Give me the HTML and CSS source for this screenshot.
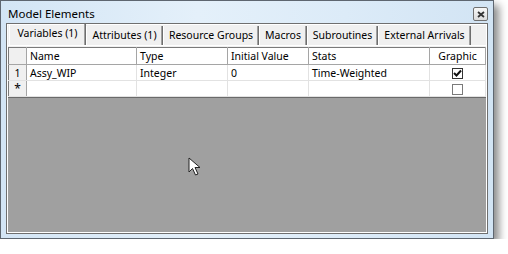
FILE: index.html
```html
<!DOCTYPE html>
<html>
<head>
    <meta charset="UTF-8">
    <title>Model Elements</title>
    <link rel="stylesheet" href="styles.css">
</head>
<body>
    <div class="window">
        <!-- Title bar -->
        <div class="titlebar">
            <span class="title">Model Elements</span>
            <span class="close">
                <svg width="8" height="7" viewBox="0 0 8 7">
                    <path d="M1 1 L7 6 M7 1 L1 6" stroke="#333" stroke-width="1.8"/>
                </svg>
            </span>
        </div>

        <!-- Client area -->
        <div class="panel">
            <div class="tabs">
                <div class="tab active t-vars">Variables (1)</div>
                <div class="tab t-attr">Attributes (1)</div>
                <div class="tab t-res">Resource Groups</div>
                <div class="tab t-mac">Macros</div>
                <div class="tab t-sub">Subroutines</div>
                <div class="tab t-ext">External Arrivals</div>
            </div>
            <div class="page">
                <table class="grid">
                    <tr class="head">
                        <th class="rowhead"></th>
                        <th class="c-name">Name</th>
                        <th class="c-type">Type</th>
                        <th class="c-init">Initial Value</th>
                        <th class="c-stats">Stats</th>
                        <th class="c-graphic">Graphic</th>
                    </tr>
                    <tr>
                        <td class="rowhead">1</td>
                        <td>Assy_WIP</td>
                        <td>Integer</td>
                        <td>0</td>
                        <td>Time-Weighted</td>
                        <td class="center"><span class="check on">
                            <svg width="9" height="9" viewBox="0 0 9 9">
                                <path d="M1 4 L3.5 6.5 L8 1.5" stroke="#111" stroke-width="2" fill="none"/>
                            </svg>
                        </span></td>
                    </tr>
                    <tr>
                        <td class="rowhead star">*</td>
                        <td></td>
                        <td></td>
                        <td></td>
                        <td></td>
                        <td class="center"><span class="check"></span></td>
                    </tr>
                </table>
                <div class="empty"></div>
            </div>
        </div>

        <!-- Mouse pointer -->
        <svg class="cursor" width="14" height="20" viewBox="0 0 14 20">
            <path d="M1 1 L1 15 L4.5 11.5 L7.5 18 L10 17 L7 10.5 L12 10.5 Z" fill="#fff" stroke="#222" stroke-width="1" stroke-linejoin="round"/>
        </svg>
    </div>
</body>
</html>
```

FILE: styles.css
```css
body {
    margin: 0;
    background-color: #fff;
    font-family: "Noto Sans", "Liberation Sans", sans-serif;
    font-size: 10.5px;
    color: #000;
}
.window {
    position: relative;
    width: 482px;
    height: 233px;
    border: 1px solid #5e6670;
    background: linear-gradient(90deg, #d3e5f5 0%, #e4f0fa 40%, #dcebf8 70%, #d2e4f4 100%);
    box-shadow: 5px 5px 8px rgba(0,0,0,0.45);
    padding: 0 5px 4px 5px;
}
.titlebar {
    height: 22px;
    display: flex;
    align-items: center;
    justify-content: space-between;
}
.title {
    font-size: 11.5px;
    padding-left: 2px;
    padding-top: 2px;
}
.close {
    width: 13px;
    height: 12px;
    margin-top: 4px;
    border: 1px solid #707070;
    border-radius: 2px;
    background: linear-gradient(#f8f8f8, #dcdcdc);
    display: flex;
    align-items: center;
    justify-content: center;
}
.panel {
    box-sizing: border-box;
    height: 211px;
    border: 1px solid #6f6f6f;
    box-shadow: inset 0 0 0 1px #fff;
    background-color: #f0f0f0;
    padding: 0 0 1px 1px;
    display: flex;
    flex-direction: column;
}
.tabs {
    display: flex;
    height: 21px;
    align-items: flex-end;
    padding-left: 1px;
}
.tab {
    box-sizing: border-box;
    height: 19px;
    line-height: 19px;
    text-align: center;
    border-left: 1px solid #fff;
    border-right: 1px solid #6e6e6e;
    box-shadow: inset -1px 0 0 #a0a0a0;
    white-space: nowrap;
}
.tab.active {
    height: 21px;
    line-height: 18px;
}
.t-vars { width: 77px; }
.t-attr { width: 77px; }
.t-res { width: 96px; }
.t-mac { width: 48px; }
.t-sub { width: 71px; }
.t-ext { width: 93px; }
.page {
    flex: 1;
    border-top: 1px solid #fff;
    padding: 1px 1px 0 0;
    display: flex;
    flex-direction: column;
}
.grid {
    border-collapse: collapse;
    table-layout: fixed;
    width: 478px;
    background-color: #fff;
    border-top: 1px solid #7a7a7a;
    border-left: 1px solid #7a7a7a;
}
.grid th {
    font-weight: normal;
    text-align: left;
    height: 16px;
    padding: 0 3px;
    background-color: #fff;
    border-right: 1px solid #a5a5a5;
    border-bottom: 1px solid #a5a5a5;
}
.grid td {
    height: 15px;
    padding: 0 3px;
    border-right: 1px solid #e2e2e2;
    border-bottom: 1px solid #e2e2e2;
    white-space: nowrap;
}
.grid .rowhead {
    width: 11px;
    background-color: #f0f0f0;
    border-right: 1px solid #a5a5a5;
    text-align: center;
}
.grid th.rowhead {
    background-color: #f0f0f0;
}
.grid .star {
    font-size: 12px;
    line-height: 10px;
}
.c-name { width: 103px; }
.c-type { width: 84px; }
.c-init { width: 74px; }
.c-stats { width: 114px; }
.grid th.c-graphic { text-align: center; }
.center { text-align: center; }
.check {
    display: inline-flex;
    align-items: center;
    justify-content: center;
    width: 9px;
    height: 9px;
    border: 1px solid #7a7a7a;
    background-color: #fff;
    vertical-align: middle;
}
.check.on {
    border-color: #333;
}
.empty {
    flex: 1;
    background-color: #a0a0a0;
    border-top: 1px solid #6a6a6a;
    width: 478px;
}
.cursor {
    position: absolute;
    left: 187px;
    top: 156px;
}
```
